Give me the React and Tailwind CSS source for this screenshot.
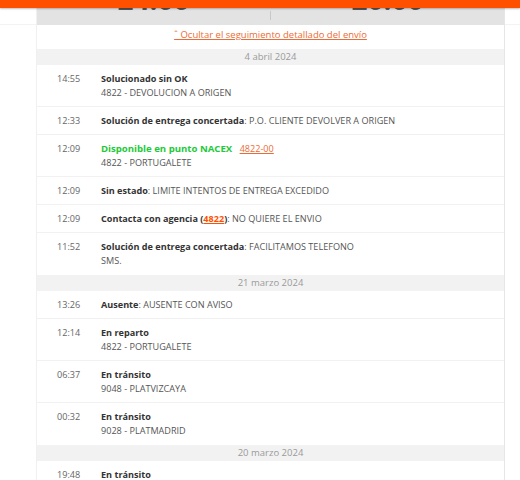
import React from "react";

const F = { fontFamily: '"Open Sans", "Liberation Sans", sans-serif' };

function DateRow({ children }) {
  return (
    <div className="h-[16px] bg-[#f2f2f2] flex items-center justify-center text-[9.5px] text-[#9a9a9a] leading-none">
      {children}
    </div>
  );
}

function Row({ time, children, last }) {
  return (
    <div className={"flex pt-[7px] text-[9.1px] leading-[14px] " + (last ? "pb-[7px]" : "pb-[6px] border-b border-[#f1f1f1]")}>
      <div className="w-[64px] pl-[20px] text-[#666] shrink-0">{time}</div>
      <div className="text-[#555] pr-4">{children}</div>
    </div>
  );
}

const B = ({ children }) => <span className="font-bold text-[#333]">{children}</span>;

export default function App() {
  return (
    <div className="w-[520px] h-[480px] overflow-hidden bg-white relative" style={F}>
      <div className="absolute top-0 left-0 right-0 h-[8px] bg-[#ff5000] shadow-[0_1px_2px_rgba(0,0,0,0.25)] z-10" />
      <div className="absolute left-0 right-0 top-[24px] h-px bg-[#f3f3f3]" />
      <div className="ml-[36px] w-[469px] border-l border-[#f0f0f0] border-r border-r-[#e6e6e6] relative bg-white">
        <div className="h-[25px] bg-[#e3e3e3] flex overflow-hidden">
          <div className="flex-1 flex justify-center">
            <span className="text-[28px] font-bold text-[#555] leading-none mt-[-15px]">24:00</span>
          </div>
          <div className="w-px bg-[#c8c8c8] mt-[11px] mb-[5px]" />
          <div className="flex-1 flex justify-center">
            <span className="text-[28px] font-bold text-[#555] leading-none mt-[-15px]">20:00</span>
          </div>
        </div>
        <div className="h-[24px] flex items-center justify-center pb-[3px]">
          <span className="text-[9.5px] text-[#ec6b35] underline">ˆ Ocultar el seguimiento detallado del envío</span>
        </div>
        <DateRow>4 abril 2024</DateRow>
        <Row time="14:55">
          <B>Solucionado sin OK</B>
          <br />4822 - DEVOLUCION A ORIGEN
        </Row>
        <Row time="12:33">
          <B>Solución de entrega concertada</B>: P.O. CLIENTE DEVOLVER A ORIGEN
        </Row>
        <Row time="12:09">
          <span className="font-bold text-[#22c93a] text-[9.6px]">Disponible en punto NACEX</span>{" "}
          <span className="text-[#ec6b35] underline ml-[5px]">4822-00</span>
          <br />4822 - PORTUGALETE
        </Row>
        <Row time="12:09">
          <B>Sin estado</B>: LIMITE INTENTOS DE ENTREGA EXCEDIDO
        </Row>
        <Row time="12:09">
          <B>Contacta con agencia (</B>
          <span className="font-bold text-[#ff5000] underline">4822</span>
          <B>)</B>: NO QUIERE EL ENVIO
        </Row>
        <Row time="11:52" last>
          <B>Solución de entrega concertada</B>: FACILITAMOS TELEFONO
          <br />SMS.
        </Row>
        <DateRow>21 marzo 2024</DateRow>
        <Row time="13:26">
          <B>Ausente</B>: AUSENTE CON AVISO
        </Row>
        <Row time="12:14">
          <B>En reparto</B>
          <br />4822 - PORTUGALETE
        </Row>
        <Row time="06:37">
          <B>En tránsito</B>
          <br />9048 - PLATVIZCAYA
        </Row>
        <Row time="00:32" last>
          <B>En tránsito</B>
          <br />9028 - PLATMADRID
        </Row>
        <DateRow>20 marzo 2024</DateRow>
        <Row time="19:48">
          <B>En tránsito</B>
          <br />9028 - PLATMADRID
        </Row>
      </div>
    </div>
  );
}
